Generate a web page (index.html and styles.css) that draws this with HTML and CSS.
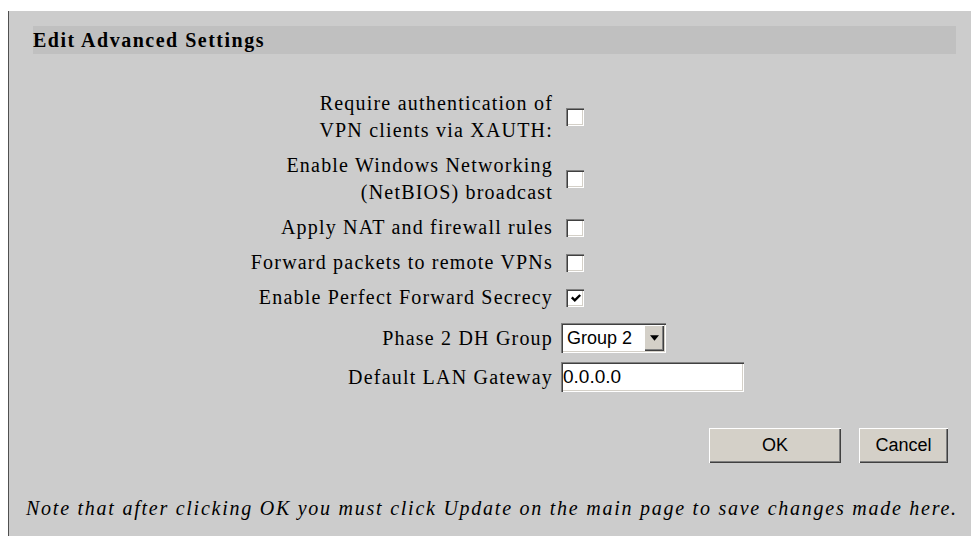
FILE: index.html
```html
<!DOCTYPE html>
<html>
<head>
<meta charset="utf-8">
<title>Edit Advanced Settings</title>
<link rel="stylesheet" href="styles.css">
</head>
<body>
<div class="panel">
  <div class="title-bar">Edit Advanced Settings</div>

  <div class="form">
    <div class="label">Require authentication of<br>VPN clients via XAUTH:</div>
    <div class="field"><span class="check"></span></div>

    <div class="label">Enable Windows Networking<br>(NetBIOS) broadcast</div>
    <div class="field"><span class="check"></span></div>

    <div class="label">Apply NAT and firewall rules</div>
    <div class="field"><span class="check"></span></div>

    <div class="label">Forward packets to remote VPNs</div>
    <div class="field"><span class="check"></span></div>

    <div class="label">Enable Perfect Forward Secrecy</div>
    <div class="field"><span class="check"><svg viewBox="0 0 10 10" width="12" height="12"><path d="M1.5 4.5 L4 7 L8.5 2.5" fill="none" stroke="#000" stroke-width="2"/></svg></span></div>

    <div class="label tall">Phase 2 DH Group</div>
    <div class="field tall">
      <span class="select"><span class="select-value">Group 2</span><span class="select-arrow"><svg viewBox="0 0 8 5" width="9" height="6"><path d="M0 0 H8 L4 5 Z" fill="#000"/></svg></span></span>
    </div>

    <div class="label">Default LAN Gateway</div>
    <div class="field"><span class="text-input">0.0.0.0</span></div>
  </div>

  <div class="actions">
    <span class="button ok">OK</span>
    <span class="button cancel">Cancel</span>
  </div>

  <p class="note">Note that after clicking OK you must click Update on the main page to save changes made here.</p>
</div>
</body>
</html>
```

FILE: styles.css
```css
html, body {
  margin: 0;
  height: 100%;
  background: #ffffff;
}

body {
  padding: 11px 0 0 8px;
  box-sizing: border-box;
  font-family: "Liberation Serif", "Times New Roman", serif;
  font-size: 20px;
  letter-spacing: 1.2px;
  color: #000;
}

.panel {
  height: 100%;
  background: #cccccc;
  border-left: 1px solid #505050;
  padding: 15px 15px 0 24px;
  box-sizing: border-box;
}

.title-bar {
  background: #c0c0c0;
  height: 28px;
  line-height: 28px;
  font-weight: bold;
  font-size: 20px;
  letter-spacing: 1.5px;
}

.form {
  display: grid;
  grid-template-columns: 525px auto;
  margin-top: 32px;
  line-height: 27px;
}

.label {
  text-align: right;
  padding: 4px 5px 4px 0;
  display: flex;
  align-items: center;
  justify-content: flex-end;
}

.field {
  display: flex;
  align-items: center;
  padding: 4px 0 4px 3px;
}

.tall {
  padding-top: 8px;
  padding-bottom: 5px;
}

/* sunken classic checkbox */
.check {
  width: 18px;
  height: 18px;
  margin-left: 5px;
  background: #fff;
  box-sizing: border-box;
  box-shadow: inset 1px 1px #808080, inset 2px 2px #404040, inset -1px -1px #ffffff, inset -2px -2px #d4d0c8;
  display: flex;
  align-items: center;
  justify-content: center;
}

.check svg {
  display: block;
  margin: 1px 0 0 1px;
}

.select {
  display: flex;
  width: 105px;
  height: 30px;
  box-sizing: border-box;
  background: #fff;
  padding: 2px;
  box-shadow: inset 1px 1px #808080, inset 2px 2px #404040, inset -1px -1px #ffffff, inset -2px -2px #d4d0c8;
  font-family: "Liberation Sans", Arial, sans-serif;
  font-size: 18px;
  letter-spacing: 0;
}

.select-value {
  flex: 1;
  line-height: 26px;
  padding-left: 4px;
}

.select-arrow {
  width: 20px;
  background: #d4d0c8;
  box-shadow: inset 1px 1px #ffffff, inset -1px -1px #404040, inset -2px -2px #808080;
  display: flex;
  align-items: center;
  justify-content: center;
}

.select-arrow svg {
  display: block;
}

.text-input {
  display: block;
  width: 183px;
  height: 30px;
  box-sizing: border-box;
  background: #fff;
  padding: 0 2px;
  line-height: 30px;
  box-shadow: inset 1px 1px #808080, inset 2px 2px #404040, inset -1px -1px #ffffff, inset -2px -2px #d4d0c8;
  font-family: "Liberation Sans", Arial, sans-serif;
  font-size: 19px;
  letter-spacing: 0;
}

.actions {
  display: flex;
  justify-content: flex-end;
  gap: 18px;
  margin-top: 32px;
  padding-right: 8px;
}

.button {
  height: 35px;
  line-height: 35px;
  text-align: center;
  background: #d4d0c8;
  box-shadow: inset 1px 1px #ffffff, inset -1px -1px #404040, inset -2px -2px #808080;
  font-family: "Liberation Sans", Arial, sans-serif;
  font-size: 18px;
  letter-spacing: 0;
}

.ok {
  width: 132px;
}

.cancel {
  width: 89px;
}

.note {
  margin: 34px 0 0 -7px;
  font-style: italic;
  font-size: 20px;
  letter-spacing: 1.75px;
  white-space: nowrap;
}
```
